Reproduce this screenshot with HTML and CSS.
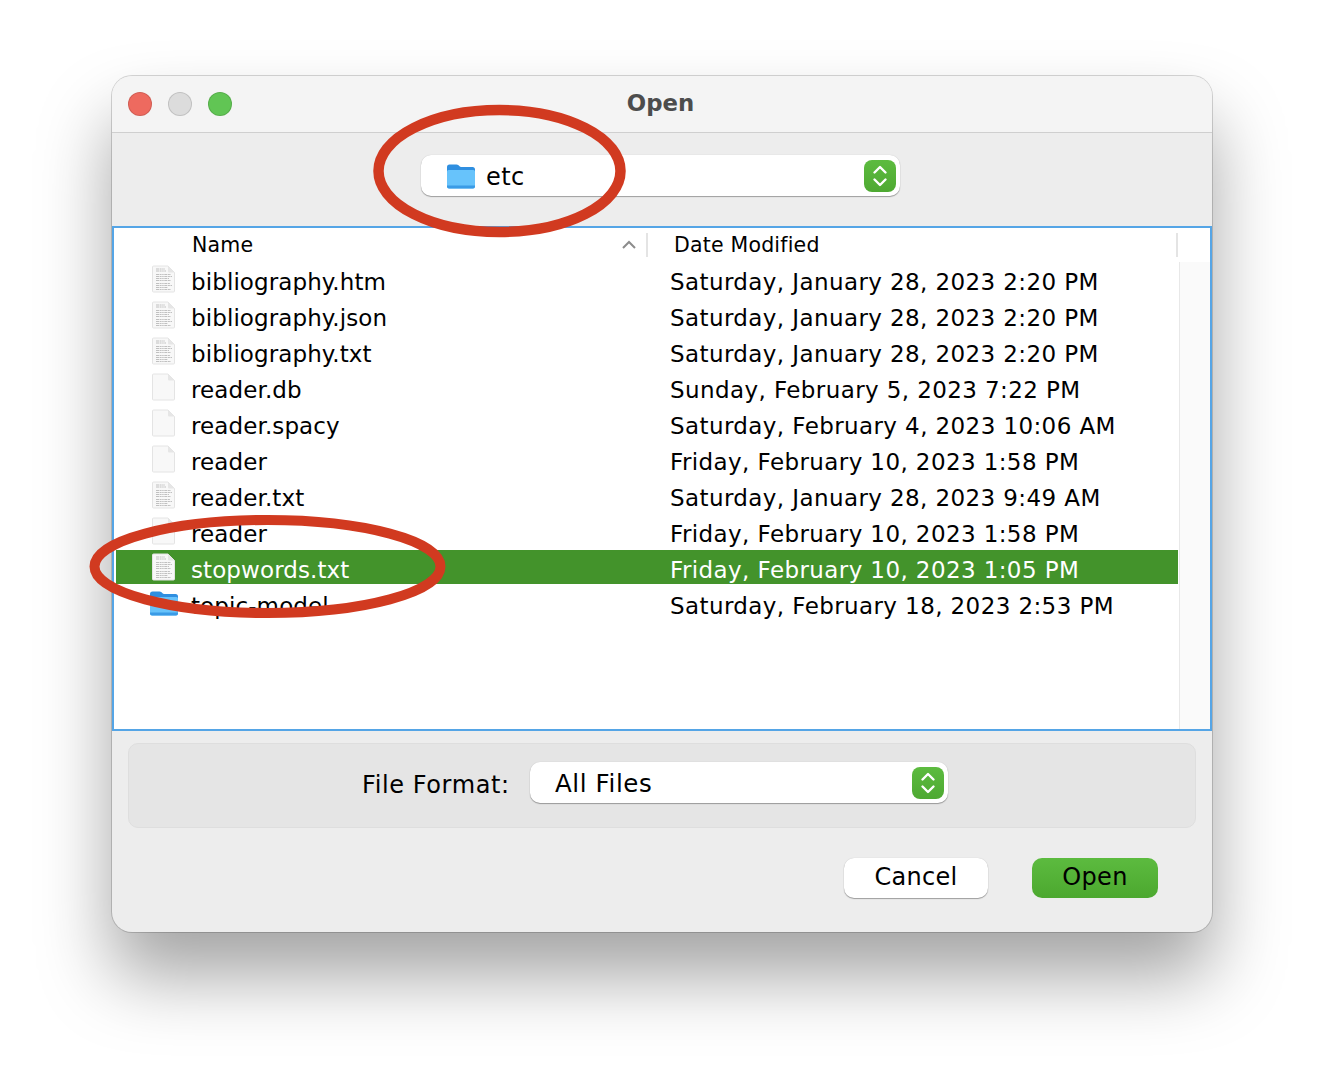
FILE: index.html
```html
<!DOCTYPE html>
<html lang="en">
<head>
<meta charset="utf-8">
<title>Open</title>
<link rel="stylesheet" href="styles.css">
</head>
<body>
<svg class="defs" width="0" height="0" aria-hidden="true">
  <defs>
    <symbol id="blank" viewBox="0 0 24 28">
      <path d="M1.500 1h14.500l6.500 6.500v18.500a1 1 0 0 1-1 1h-20a1 1 0 0 1-1-1V2a1 1 0 0 1 1-1z" fill="#f8f8f8" stroke="#e4e4e4"/>
      <path d="M16 1v5.500a1 1 0 0 0 1 1h5.500z" fill="#e6e6e6"/>
    </symbol>
    <symbol id="doc" viewBox="0 0 24 28">
      <path d="M1.500 1h14.500l6.500 6.500v18.500a1 1 0 0 1-1 1h-20a1 1 0 0 1-1-1V2a1 1 0 0 1 1-1z" fill="#f8f8f8" stroke="#e4e4e4"/>
      <path d="M16 1v5.500a1 1 0 0 0 1 1h5.500z" fill="#e6e6e6"/>
      <path d="M4 4h9M4 6h10M4 9.500h15M4 11.500h16M4 13.500h13M4 15.500h15M4 18.500h14M4 20.500h16M4 22.500h12M4 24.500h15" stroke="#c0c0c0" stroke-width="1" stroke-dasharray="3 .6 2 .6 1.500 .6"/>
    </symbol>
    <symbol id="folder" viewBox="0 0 30 28">
      <path d="M1 5a2.500 2.500 0 0 1 2.500-2.500h7c1.500 0 2 .8 3 1.800.6.600 1 .7 2 .7h11A2.500 2.500 0 0 1 29 7.500V12H1z" fill="#2f8fe0"/>
      <path d="M1 9.500A1.500 1.500 0 0 1 2.500 8h25A1.500 1.500 0 0 1 29 9.500v15a2 2 0 0 1-2 2H3a2 2 0 0 1-2-2z" fill="#67c3fb"/>
      <path d="M1 24.500v-1h28v1a2 2 0 0 1-2 2H3a2 2 0 0 1-2-2z" fill="#3a9be6"/>
    </symbol>
    <symbol id="stepper" viewBox="0 0 32 32">
      <path d="M10.500 12.500 16 7l5.500 5.500M10.500 19.500 16 25l5.500-5.500" fill="none" stroke="#fff" stroke-width="2.400" stroke-linecap="round" stroke-linejoin="round"/>
    </symbol>
  </defs>
</svg>

<main class="window">
  <header class="titlebar">
    <div class="lights">
      <span class="light light-red"></span>
      <span class="light light-grey"></span>
      <span class="light light-green"></span>
    </div>
    <h1 class="title">Open</h1>
  </header>

  <div class="toolbar">
    <div class="select select-path">
      <svg class="select-folder"><use href="#folder"/></svg>
      <span class="select-label select-label-path">etc</span>
      <span class="stepper"><svg class="stepper-icon"><use href="#stepper"/></svg></span>
    </div>
  </div>

  <section class="table">
    <div class="thead">
      <div class="th th-name"><span>Name</span>
        <svg class="sort" viewBox="0 0 16 10"><path d="M2 8l6-6 6 6" fill="none" stroke="#8c8c8c" stroke-width="2"/></svg>
      </div>
      <div class="th th-date"><span>Date Modified</span></div>
      <div class="th-end"></div>
    </div>
    <div class="tbody">
      <div class="rows">
        <div class="row"><svg class="file-icon"><use href="#doc"/></svg><span class="cell-name">bibliography.htm</span><span class="cell-date">Saturday, January 28, 2023 2:20 PM</span></div>
        <div class="row"><svg class="file-icon"><use href="#doc"/></svg><span class="cell-name">bibliography.json</span><span class="cell-date">Saturday, January 28, 2023 2:20 PM</span></div>
        <div class="row"><svg class="file-icon"><use href="#doc"/></svg><span class="cell-name">bibliography.txt</span><span class="cell-date">Saturday, January 28, 2023 2:20 PM</span></div>
        <div class="row"><svg class="file-icon"><use href="#blank"/></svg><span class="cell-name">reader.db</span><span class="cell-date">Sunday, February 5, 2023 7:22 PM</span></div>
        <div class="row"><svg class="file-icon"><use href="#blank"/></svg><span class="cell-name">reader.spacy</span><span class="cell-date">Saturday, February 4, 2023 10:06 AM</span></div>
        <div class="row"><svg class="file-icon"><use href="#blank"/></svg><span class="cell-name">reader</span><span class="cell-date">Friday, February 10, 2023 1:58 PM</span></div>
        <div class="row"><svg class="file-icon"><use href="#doc"/></svg><span class="cell-name">reader.txt</span><span class="cell-date">Saturday, January 28, 2023 9:49 AM</span></div>
        <div class="row"><svg class="file-icon"><use href="#blank"/></svg><span class="cell-name">reader</span><span class="cell-date">Friday, February 10, 2023 1:58 PM</span></div>
        <div class="row row-selected"><svg class="file-icon"><use href="#doc"/></svg><span class="cell-name">stopwords.txt</span><span class="cell-date">Friday, February 10, 2023 1:05 PM</span></div>
        <div class="row"><svg class="file-icon file-icon-folder"><use href="#folder"/></svg><span class="cell-name">topic-model</span><span class="cell-date">Saturday, February 18, 2023 2:53 PM</span></div>
      </div>
      <div class="scrolltrack"></div>
    </div>
  </section>

  <section class="format-panel">
    <span class="format-label">File Format:</span>
    <div class="select select-format">
      <span class="select-label">All Files</span>
      <span class="stepper"><svg class="stepper-icon"><use href="#stepper"/></svg></span>
    </div>
  </section>

  <footer class="actions">
    <button class="btn btn-cancel" type="button">Cancel</button>
    <button class="btn btn-open" type="button">Open</button>
  </footer>
</main>

<svg class="annotations" viewBox="0 0 1324 1080" aria-hidden="true">
  <ellipse cx="499.500" cy="171" rx="121" ry="61" fill="none" stroke="#d13a20" stroke-width="10.500"/>
  <ellipse cx="267.500" cy="566.500" rx="173" ry="46.500" fill="none" stroke="#d13a20" stroke-width="10"/>
</svg>
</body>
</html>
```
FILE: styles.css
```css
* { box-sizing: border-box; }
html, body { margin: 0; height: 100%; }
body {
  width: 1324px;
  height: 1080px;
  padding: 76px 112px 0;
  background: #fff;
  overflow: hidden;
  position: relative;
  font-family: "DejaVu Sans", sans-serif;
  color: #000;
}
.defs { position: absolute; }

.window {
  width: 1100px;
  height: 856px;
  background: #ededed;
  border-radius: 20px;
  box-shadow: 0 0 0 1px rgba(0,0,0,.16), 0 44px 72px rgba(0,0,0,.36);
  overflow: hidden;
  display: flex;
  flex-direction: column;
}

.titlebar {
  height: 57px;
  flex: none;
  background: #f4f4f4;
  border-bottom: 1px solid #cfcfcf;
  display: flex;
  justify-content: center;
  padding-right: 3px;
  position: relative;
}
.lights { position: absolute; left: 16px; top: 16px; display: flex; gap: 16px; }
.light { width: 24px; height: 24px; border-radius: 50%; border: 1px solid rgba(0,0,0,.12); }
.light-red { background: #ee6a5f; }
.light-grey { background: #dcdcdc; }
.light-green { background: #61c554; }
.title { margin: 0; font-size: 22.800px; line-height: 54px; font-weight: 700; color: #4d4d4d; }

.toolbar {
  height: 93px;
  flex: none;
  display: flex;
  align-items: flex-start;
  padding: 22px 0 0 309px;
}
.select {
  height: 41px;
  background: #fff;
  border-radius: 10px;
  box-shadow: 0 1px 1px rgba(0,0,0,.32), 0 0 1px rgba(0,0,0,.2);
  display: flex;
  align-items: center;
  position: relative;
}
.select-path { width: 479px; padding-left: 25px; }
.select-format { width: 418px; padding-left: 25px; }
.select-folder { width: 30px; height: 28px; margin-right: 10px; }
.select-label { font-size: 24.500px; letter-spacing: .6px; padding-top: 1px; }
.select-label-path { font-size: 24px; letter-spacing: .4px; padding-top: 3px; }
.stepper {
  position: absolute;
  right: 4px;
  top: 5px;
  width: 32px;
  height: 32px;
  border-radius: 8px;
  background: linear-gradient(#5cbb3f, #4ea932);
}
.stepper-icon { width: 32px; height: 32px; display: block; }

.table {
  height: 505px;
  flex: none;
  background: #fff;
  border: 2px solid #55a5e6;
  display: flex;
  flex-direction: column;
}
.thead { height: 34px; flex: none; display: flex; align-items: center; font-size: 20.500px; letter-spacing: .2px; }
.th { height: 24px; display: flex; align-items: center; border-right: 2px solid #e4e4e4; padding-bottom: 1px; }
.th-name { width: 534px; padding-left: 78px; justify-content: space-between; padding-right: 9px; }
.th-date { width: 530px; padding-left: 26px; }
.sort { width: 16px; height: 10px; }
.tbody { flex: 1; display: flex; min-height: 0; }
.rows { width: 1064px; padding-left: 2px; display: flex; flex-direction: column; gap: 2px; }
.row {
  height: 34px;
  display: flex;
  align-items: center;
  flex: none;
  font-size: 23px;
}
.row-selected { background: #43932b; color: #fff; }
.file-icon { width: 24px; height: 28px; flex: none; margin: 0 15px 0 36px; }
.file-icon-folder { width: 30px; margin: 0 12px 0 33px; }
.cell-name { width: 479px; flex: none; padding-top: 5px; letter-spacing: .1px; }
.cell-date { padding-top: 5px; letter-spacing: .4px; }
.scrolltrack { width: 31px; margin-left: 1px; background: #fafafa; border-left: 1px solid #e8e8e8; }

.format-panel {
  height: 85px;
  flex: none;
  margin: 12px 16px 0;
  background: #e5e5e5;
  border: 1px solid #dedede;
  border-radius: 10px;
  display: flex;
  align-items: flex-start;
  padding: 18px 0 0 233px;
}
.format-label { width: 168px; font-size: 24px; letter-spacing: .6px; padding-top: 9px; }

.actions { flex: 1; display: flex; align-items: flex-start; justify-content: flex-end; gap: 44px; padding: 30px 54px 0 0; }
.btn {
  height: 40px;
  border: 0;
  border-radius: 10px;
  font-family: "DejaVu Sans", sans-serif;
  font-size: 24px;
  letter-spacing: .3px;
  color: #000;
  padding: 0 0 2px;
}
.btn-cancel { width: 144px; background: #fff; box-shadow: 0 1px 1px rgba(0,0,0,.32), 0 0 1px rgba(0,0,0,.2); }
.btn-open { width: 126px; background: linear-gradient(#5cbb3f, #4ca82f); }

.annotations { position: absolute; left: 0; top: 0; width: 1324px; height: 1080px; pointer-events: none; }
```
